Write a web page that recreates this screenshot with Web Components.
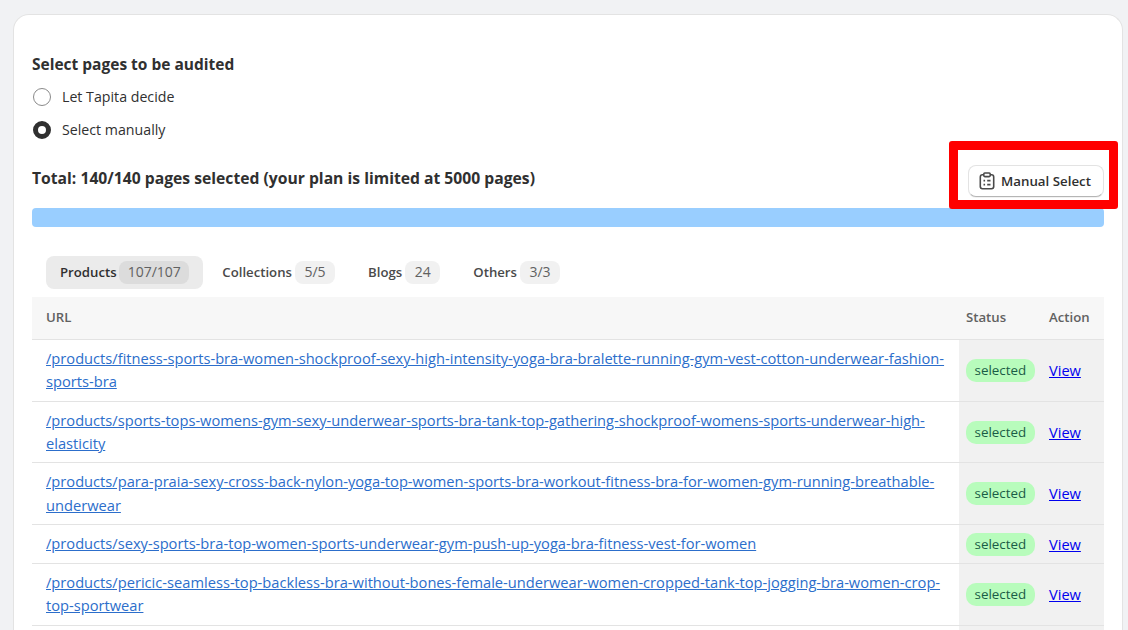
<!DOCTYPE html>
<html lang="en">
<head>
<meta charset="utf-8">
<title>Audit pages</title>
<style>
    html, body { height: 630px; overflow: hidden; }
    body {
        margin: 0;
        background: #f1f2f4;
        font-family: "Open Sans", "Noto Sans", sans-serif;
        font-size: 14.2px;
        color: #303030;
    }
</style>
</head>
<body>
<audit-card>
    <h-title>Select pages to be audited</h-title>
    <radio-option>Let Tapita decide</radio-option>
    <radio-option checked>Select manually</radio-option>
    <total-bar>
        Total: 140/140 pages selected (your plan is limited at 5000 pages)
    </total-bar>
    <tab-bar>
        <tab-pill count="107/107" active>Products</tab-pill>
        <tab-pill count="5/5">Collections</tab-pill>
        <tab-pill count="24">Blogs</tab-pill>
        <tab-pill count="3/3">Others</tab-pill>
    </tab-bar>
    <url-table>
        <url-row href="/products/fitness-sports-bra-women-shockproof-sexy-high-intensity-yoga-bra-bralette-running-gym-vest-cotton-underwear-fashion-sports-bra"></url-row>
        <url-row href="/products/sports-tops-womens-gym-sexy-underwear-sports-bra-tank-top-gathering-shockproof-womens-sports-underwear-high-elasticity"></url-row>
        <url-row href="/products/para-praia-sexy-cross-back-nylon-yoga-top-women-sports-bra-workout-fitness-bra-for-women-gym-running-breathable-underwear"></url-row>
        <url-row href="/products/sexy-sports-bra-top-women-sports-underwear-gym-push-up-yoga-bra-fitness-vest-for-women"></url-row>
        <url-row href="/products/pericic-seamless-top-backless-bra-without-bones-female-underwear-women-cropped-tank-top-jogging-bra-women-crop-top-sportwear"></url-row>
        <url-row></url-row>
    </url-table>
</audit-card>

<script>
class AuditCard extends HTMLElement {
    constructor() {
        super();
        this.attachShadow({ mode: 'open' });
        this.shadowRoot.innerHTML = `
            <style>
                :host {
                    display: block;
                    margin: 14px 5px 0 13px;
                    padding: 37px 18px 0 18px;
                    height: 616px;
                    overflow: hidden;
                    box-sizing: border-box;
                    background: #fff;
                    border: 1px solid #e3e3e3;
                    border-bottom: 0;
                    border-radius: 16px 16px 0 0;
                }
            </style>
            <slot></slot>
        `;
    }
}

class HTitle extends HTMLElement {
    constructor() {
        super();
        this.attachShadow({ mode: 'open' });
        this.shadowRoot.innerHTML = `
            <style>
                :host {
                    display: block;
                    margin-bottom: 4.5px;
                    font-size: 15.5px;
                    font-weight: 700;
                    line-height: 24px;
                    color: #303030;
                }
            </style>
            <slot></slot>
        `;
    }
}

class RadioOption extends HTMLElement {
    constructor() {
        super();
        this.attachShadow({ mode: 'open' });
        const on = this.hasAttribute('checked');
        this.shadowRoot.innerHTML = `
            <style>
                :host {
                    display: flex;
                    align-items: center;
                    gap: 11px;
                    height: 33px;
                    padding-left: 1px;
                    color: #303030;
                }
                .dot {
                    box-sizing: border-box;
                    width: 18px;
                    height: 18px;
                    border-radius: 50%;
                    border: ${on ? '5px solid #303030' : '1px solid #8a8a8a'};
                    background: #fff;
                }
                .label { margin-top: -2px; }
            </style>
            <span class="dot"></span>
            <span class="label"><slot></slot></span>
        `;
    }
}

class TotalBar extends HTMLElement {
    constructor() {
        super();
        this.attachShadow({ mode: 'open' });
        this.shadowRoot.innerHTML = `
            <style>
                :host {
                    display: block;
                    position: relative;
                }
                .head {
                    display: flex;
                    justify-content: space-between;
                    align-items: flex-start;
                    padding-top: 19.5px;
                    height: 42px;
                    font-size: 15.7px;
                    font-weight: 700;
                    line-height: 24px;
                }
                button {
                    display: inline-flex;
                    align-items: center;
                    justify-content: flex-start;
                    gap: 4px;
                    box-sizing: border-box;
                    height: 32px;
                    width: 136px;
                    margin-top: -1px;
                    padding: 0 0 0 8px;
                    border: 1px solid #e3e3e3;
                    border-bottom-color: #b5b5b5;
                    border-radius: 8px;
                    background: #fff;
                    box-shadow: 0 1px 0 rgba(0,0,0,.05);
                    font: 600 13.3px "Open Sans", "Noto Sans", sans-serif;
                    color: #303030;
                    white-space: nowrap;
                }
                svg { width: 20px; height: 20px; flex: none; }
                .progress {
                    height: 19px;
                    border-radius: 4px;
                    background: #99ceff;
                }
                .mark {
                    position: absolute;
                    right: -14px;
                    top: -5.5px;
                    width: 169px;
                    height: 68px;
                    box-sizing: border-box;
                    border: 9px solid #ff0000;
                    border-radius: 3px;
                    pointer-events: none;
                }
            </style>
            <div class="head">
                <span><slot></slot></span>
                <button>
                    <svg viewBox="0 0 20 20" fill="none" stroke="#4a4a4a" stroke-width="1.6">
                        <rect x="3.3" y="3.8" width="13.4" height="14" rx="2.2"/>
                        <rect x="6.8" y="2" width="6.4" height="3.6" rx="1" fill="#fff"/>
                        <path d="M6.5 9.6h1.6M10.2 9.6h3.3M6.5 13.6h1.6M10.2 13.6h3.3"/>
                    </svg>
                    Manual Select
                </button>
            </div>
            <div class="progress"></div>
            <div class="mark"></div>
        `;
    }
}

class TabBar extends HTMLElement {
    constructor() {
        super();
        this.attachShadow({ mode: 'open' });
        this.shadowRoot.innerHTML = `
            <style>
                :host {
                    display: flex;
                    gap: 5px;
                    padding: 29px 0 8px 14px;
                }
            </style>
            <slot></slot>
        `;
    }
}

class TabPill extends HTMLElement {
    constructor() {
        super();
        this.attachShadow({ mode: 'open' });
        const on = this.hasAttribute('active');
        this.shadowRoot.innerHTML = `
            <style>
                :host {
                    display: flex;
                    align-items: center;
                    gap: ${on ? '2.5px' : '3px'};
                    height: 33px;
                    padding: 0 14px;
                    border-radius: 8px;
                    font-size: 13.2px;
                    font-weight: 600;
                    color: #4a4a4a;
                    background: ${on ? '#ebebeb' : 'transparent'};
                }
                :host([active]) { color: #303030; }
                .name { margin-top: -2px; }
                .count {
                    padding: 0 ${on ? '8.5px' : '9.5px'};
                    height: 23px;
                    line-height: 22px;
                    border-radius: 8px;
                    font-size: 14px;
                    font-weight: 400;
                    color: #616161;
                    background: ${on ? '#dcdcdc' : '#f1f1f1'};
                }
            </style>
            <span class="name"><slot></slot></span>
            <span class="count">${this.getAttribute('count')}</span>
        `;
    }
}

const COLS = 'grid-template-columns: 927px 83px 62px;';

class UrlTable extends HTMLElement {
    constructor() {
        super();
        this.attachShadow({ mode: 'open' });
        this.shadowRoot.innerHTML = `
            <style>
                :host { display: block; }
                .head {
                    display: grid;
                    ${COLS}
                    height: 43px;
                    box-sizing: border-box;
                    background: #f7f7f7;
                    border-bottom: 1px solid #e3e3e3;
                    font-size: 13.2px;
                    font-weight: 600;
                    color: #616161;
                }
                .head div { padding: 11px 14px 0 7px; }
                .head div:first-child { padding-left: 14px; }
            </style>
            <div class="head">
                <div>URL</div>
                <div>Status</div>
                <div>Action</div>
            </div>
            <slot></slot>
        `;
    }
}

class UrlRow extends HTMLElement {
    constructor() {
        super();
        this.attachShadow({ mode: 'open' });
        const href = this.getAttribute('href');
        this.shadowRoot.innerHTML = `
            <style>
                :host {
                    display: grid;
                    ${COLS}
                    min-height: 38px;
                    border-bottom: 1px solid #e3e3e3;
                }
                .url {
                    padding: 7.1px 14px;
                    font-size: 14.67px;
                    line-height: 23.25px;
                }
                .url a { color: #2c6ecb; }
                .status, .action {
                    display: flex;
                    align-items: center;
                    background: #f1f1f1;
                    padding-left: 7px;
                }
                .badge {
                    height: 23px;
                    line-height: 23px;
                    padding: 0 8.5px;
                    border-radius: 10px;
                    font-size: 13.4px;
                    background: #b8fcbc;
                    color: #1a5c46;
                }
                .action a { color: #0000ee; font-size: 14.6px; margin-top: -1px; }
            </style>
            <div class="url">${href ? `<a href="#">${href}</a>` : ''}</div>
            <div class="status">${href ? '<span class="badge">selected</span>' : ''}</div>
            <div class="action">${href ? '<a href="#">View</a>' : ''}</div>
        `;
    }
}

customElements.define('audit-card', AuditCard);
customElements.define('h-title', HTitle);
customElements.define('radio-option', RadioOption);
customElements.define('total-bar', TotalBar);
customElements.define('tab-bar', TabBar);
customElements.define('tab-pill', TabPill);
customElements.define('url-table', UrlTable);
customElements.define('url-row', UrlRow);
</script>
</body>
</html>
